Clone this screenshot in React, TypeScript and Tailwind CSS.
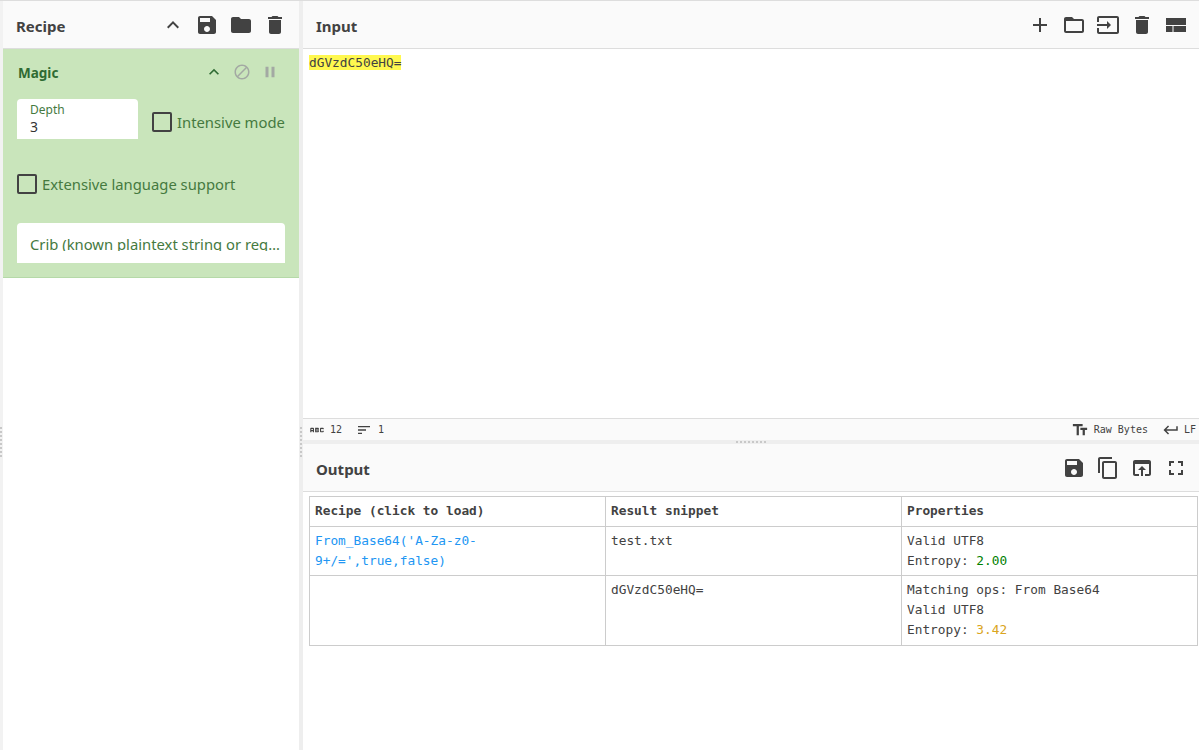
const ui = "font-['Noto_Sans',sans-serif]";
const mono = "font-['DejaVu_Sans_Mono',monospace]";

function Icon({ d, size = 24, className = '' }: { d: string; size?: number; className?: string }) {
  return (
    <svg width={size} height={size} viewBox="0 0 24 24" fill="currentColor" className={className}>
      <path d={d} />
    </svg>
  );
}

const icons = {
  up: 'M7.41 15.41L12 10.83l4.59 4.58L18 14l-6-6-6 6z',
  save: 'M17 3H5c-1.11 0-2 .9-2 2v14c0 1.1.89 2 2 2h14c1.1 0 2-.9 2-2V7l-4-4zm-5 16c-1.66 0-3-1.34-3-3s1.34-3 3-3 3 1.34 3 3-1.34 3-3 3zm3-10H5V5h10v4z',
  folder: 'M10 4H4c-1.1 0-1.99.9-1.99 2L2 18c0 1.1.9 2 2 2h16c1.1 0 2-.9 2-2V8c0-1.1-.9-2-2-2h-8l-2-2z',
  trash: 'M6 19c0 1.1.9 2 2 2h8c1.1 0 2-.9 2-2V7H6v12zM19 4h-3.5l-1-1h-5l-1 1H5v2h14V4z',
  block: 'M12 2C6.48 2 2 6.48 2 12s4.48 10 10 10 10-4.48 10-10S17.52 2 12 2zM4 12c0-4.42 3.58-8 8-8 1.85 0 3.55.63 4.9 1.69L5.69 16.9C4.63 15.55 4 13.85 4 12zm8 8c-1.85 0-3.55-.63-4.9-1.69L18.31 7.1C19.37 8.45 20 10.15 20 12c0 4.42-3.58 8-8 8z',
  pause: 'M6 19h4V5H6v14zm8-14v14h4V5h-4z',
  add: 'M19 13h-6v6h-2v-6H5v-2h6V5h2v6h6v2z',
  folderOpen: 'M20 6h-8l-2-2H4c-1.1 0-1.99.9-1.99 2L2 18c0 1.1.9 2 2 2h16c1.1 0 2-.9 2-2V8c0-1.1-.9-2-2-2zm0 12H4V8h16v10z',
  input: 'M21 3.01H3c-1.1 0-2 .9-2 2V9h2V4.99h18v14.03H3V15H1v4.01c0 1.1.9 1.98 2 1.98h18c1.1 0 2-.88 2-1.98v-14c0-1.11-.9-2-2-2zM11 16l4-4-4-4v3H1v2h10v3z',
  layout: 'M2 5h20v7H2zM2 13h6.5v6H2zM9.5 13H22v6H9.5z',
  copy: 'M16 1H4c-1.1 0-2 .9-2 2v14h2V3h12V1zm3 4H8c-1.1 0-2 .9-2 2v14c0 1.1.9 2 2 2h11c1.1 0 2-.9 2-2V7c0-1.1-.9-2-2-2zm0 16H8V7h11v14z',
  open: 'M19 4H5c-1.11 0-2 .9-2 2v12c0 1.1.89 2 2 2h4v-2H5V8h14v10h-4v2h4c1.1 0 2-.9 2-2V6c0-1.1-.89-2-2-2zm-7 6l-4 4h3v6h2v-6h3l-4-4z',
  fullscreen: 'M7 14H5v5h5v-2H7v-3zm-2-4h2V7h3V5H5v5zm12 7h-3v2h5v-5h-2v3zM14 5v2h3v3h2V5h-5z',
  textFields: 'M2.5 4v3h5v12h3V7h5V4h-13zm19 5h-9v3h3v7h3v-7h3V9z',
  enter: 'M19 7v4H5.83l3.58-3.59L8 6l-6 6 6 6 1.41-1.41L5.83 13H21V7z',
  sort: 'M3 18h6v-2H3v2zM3 6v2h18V6H3zm0 7h12v-2H3v2z',
  abc: 'M21 11h-1.5v-.5h-2v3h2V13H21v1c0 .55-.45 1-1 1h-3c-.55 0-1-.45-1-1v-4c0-.55.45-1 1-1h3c.55 0 1 .45 1 1v1zM8 10v5H6.5v-1.5h-2V15H3v-5c0-.55.45-1 1-1h3c.55 0 1 .45 1 1zm-1.5.5h-2V12h2v-1.5zm7 1.5c.55 0 1 .45 1 1v1c0 .55-.45 1-1 1h-4V9h4c.55 0 1 .45 1 1v1c0 .55-.45 1-1 1zM11 10.5v.75h2v-.75h-2zm2 2.25h-2v.75h2v-.75z',
};

function Grip({ vertical }: { vertical?: boolean }) {
  return (
    <div className={vertical ? 'flex flex-col gap-[2px]' : 'flex gap-[2px]'}>
      {Array.from({ length: 8 }).map((_, i) => (
        <span key={i} className="block w-[2px] h-[2px] bg-[#c8c8c8]" />
      ))}
    </div>
  );
}

function Check({ label }: { label: string }) {
  return (
    <div className="flex items-center gap-[5px]">
      <span className="block w-5 h-5 shrink-0 border-2 border-[#424242] rounded-[2px]" />
      <span className="text-[14.8px] text-[#457a3f] leading-5 whitespace-nowrap">{label}</span>
    </div>
  );
}

const rows = [
  {
    recipe: "From_Base64('A-Za-z0-9+/=',true,false)",
    snippet: 'test.txt',
    props: ['Valid UTF8'],
    entropy: '2.00',
    color: 'text-[#008000]',
    h: 'h-[49px]',
  },
  {
    recipe: '',
    snippet: 'dGVzdC50eHQ=',
    props: ['Matching ops: From Base64', 'Valid UTF8'],
    entropy: '3.42',
    color: 'text-[#daa520]',
    h: 'h-[70px]',
  },
];

export default function App() {
  return (
    <div className={`${ui} w-[1199px] h-[750px] overflow-hidden flex bg-white text-[#424242] border-t border-[#ddd]`}>
      <div className="w-[3px] bg-[#f2f2f2] pt-[426px]">
        <Grip vertical />
      </div>

      {/* recipe */}
      <div className="w-[296px] flex flex-col">
        <div className="h-[48px] shrink-0 bg-[#fafafa] border-b border-[#ddd] flex items-center pl-[13px] pr-[12px]">
          <span className="text-[15px] font-bold flex-1 pt-[4px]">Recipe</span>
          <Icon d={icons.up} className="mr-[10px]" />
          <Icon d={icons.save} className="mr-[10px]" />
          <Icon d={icons.folder} className="mr-[10px]" />
          <Icon d={icons.trash} />
        </div>
        <div className="h-[229px] bg-[#c9e5bb] border-b border-[#b5d9a8] pl-[14px] pr-[14px] pt-[11px]">
          <div className="flex items-center h-[24px]">
            <span className="text-[13.5px] font-bold text-[#2f6b33] flex-1 pl-px pt-[2px]">Magic</span>
            <Icon d={icons.up} size={20} className="text-[#2f6b33] mr-[9px]" />
            <Icon d={icons.block} size={18} className="text-[#a3a9a3] mr-[10px]" />
            <Icon d={icons.pause} size={18} className="text-[#a3a9a3] mr-[6px]" />
          </div>
          <div className="flex gap-[14px] mt-[15px]">
            <div className="w-[121px] h-[40px] shrink-0 bg-white rounded-t-[4px] pl-[13px] pt-[3px] leading-none">
              <div className="text-[12px] text-[#457a3f] leading-4">Depth</div>
              <div className="text-[14px] text-[#333] leading-4 pt-px">3</div>
            </div>
            <div className="pt-[13px]">
              <Check label="Intensive mode" />
            </div>
          </div>
          <div className="mt-[35px]">
            <Check label="Extensive language support" />
          </div>
          <div className="mt-[29px] h-[40px] bg-white rounded-t-[4px] pl-[13px] pt-[14px]">
            <div className="text-[14.8px] leading-[14px] h-[14px] text-[#457a3f] whitespace-nowrap overflow-hidden text-ellipsis">
              Crib (known plaintext string or regex)
            </div>
          </div>
        </div>
      </div>

      <div className="w-[4px] bg-[#eee] pt-[426px] pl-px">
        <Grip vertical />
      </div>

      {/* input and output */}
      <div className="flex-1 flex flex-col min-w-0">
        <div className="h-[48px] shrink-0 bg-[#fafafa] border-b border-[#ddd] flex items-center pl-[13px] pr-[11px]">
          <span className="text-[15px] font-bold flex-1 pt-[4px]">Input</span>
          <Icon d={icons.add} className="mr-[10px]" />
          <Icon d={icons.folderOpen} className="mr-[10px]" />
          <Icon d={icons.input} className="mr-[10px]" />
          <Icon d={icons.trash} className="mr-[10px]" />
          <Icon d={icons.layout} />
        </div>
        <div className={`${mono} h-[369px] shrink-0 pl-[6px] pt-[5px] text-[12.8px] leading-[18px] text-[#424242]`}>
          <span className="bg-[#fff84f]">dGVzdC50eHQ=</span>
        </div>
        <div className={`${mono} h-[22px] shrink-0 bg-[#fafafa] border-t border-[#ddd] flex items-center pl-[5px] pr-[3px] text-[10px] text-[#424242]`}>
          <Icon d={icons.abc} size={18} className="mr-[4px]" />
          <span className="mr-[14px]">12</span>
          <Icon d={icons.sort} size={16} className="mr-[6px]" />
          <span className="flex-1">1</span>
          <Icon d={icons.textFields} size={18} className="mr-[5px]" />
          <span className="mr-[14px]">Raw Bytes</span>
          <Icon d={icons.enter} size={18} className="mr-[4px]" />
          <span>LF</span>
        </div>
        <div className="h-[4px] shrink-0 bg-[#eee] flex items-center justify-center">
          <Grip />
        </div>
        <div className="h-[48px] shrink-0 bg-[#fafafa] border-b border-[#ddd] flex items-center pl-[13px] pr-[11px]">
          <span className="text-[15px] font-bold flex-1 pt-[4px]">Output</span>
          <Icon d={icons.save} className="mr-[10px]" />
          <Icon d={icons.copy} className="mr-[10px]" />
          <Icon d={icons.open} className="mr-[10px]" />
          <Icon d={icons.fullscreen} />
        </div>
        <div className="pl-[6px] pt-[4px]">
          <table className={`${mono} w-[889px] table-fixed border-collapse text-[12.8px] leading-5 text-[#424242]`}>
            <thead>
              <tr className="h-[30px]">
                {['Recipe (click to load)', 'Result snippet', 'Properties'].map((h) => (
                  <th key={h} className="border border-[#ccc] px-[5px] pb-[2px] text-left font-bold align-middle">
                    {h}
                  </th>
                ))}
              </tr>
            </thead>
            <tbody>
              {rows.map((r) => (
                <tr key={r.snippet} className={r.h}>
                  <td className="border border-[#ccc] px-[5px] pt-[4px] align-top text-[#2196f3] break-words">
                    {r.recipe}
                  </td>
                  <td className="border border-[#ccc] px-[5px] pt-[4px] align-top">{r.snippet}</td>
                  <td className="border border-[#ccc] px-[5px] pt-[4px] align-top">
                    {r.props.map((p) => (
                      <div key={p}>{p}</div>
                    ))}
                    <div>
                      Entropy: <span className={r.color}>{r.entropy}</span>
                    </div>
                  </td>
                </tr>
              ))}
            </tbody>
          </table>
        </div>
      </div>
    </div>
  );
}
